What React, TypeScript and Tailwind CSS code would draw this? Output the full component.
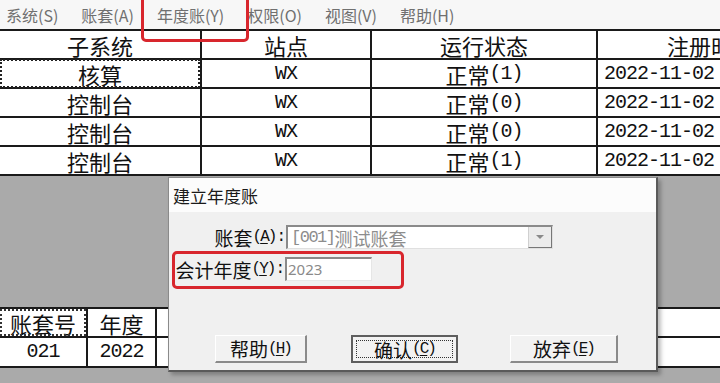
import React from 'react';

const CJK_RE = /([\u3400-\u9fff\uff00-\uffef]+)/;

function Mixed({ text }: { text: string }) {
  const parts = text.split(CJK_RE).filter(Boolean);
  return (
    <>
      {parts.map((p, i) =>
        CJK_RE.test(p) ? (
          <span key={i} className="font-['Noto_Sans_CJK_SC',sans-serif] text-[22px]">
            {p}
          </span>
        ) : (
          <span key={i} className="font-['Liberation_Mono',monospace] text-[20px] tracking-[-1px]">
            {p}
          </span>
        )
      )}
    </>
  );
}

function Mnemo({ cjk, k, colon }: { cjk: string; k: string; colon?: boolean }) {
  return (
    <span className="inline-flex items-center leading-none">
      <span className="font-['Noto_Sans_CJK_SC',sans-serif] text-[19px]">{cjk}</span>
      <span className="font-['Liberation_Mono',monospace] text-[16px] tracking-[-2px]">(</span>
      <span className="font-['Liberation_Mono',monospace] text-[16px] tracking-[-2px] underline underline-offset-2">{k}</span>
      <span className="font-['Liberation_Mono',monospace] text-[16px] tracking-[-2px]">)</span>
      {colon && <span className="font-['Liberation_Mono',monospace] text-[16px] ml-[1px] tracking-[-2px]">:</span>}
    </span>
  );
}

const rows = [
  ['核算', 'WX', '正常(1)', '2022-11-02'],
  ['控制台', 'WX', '正常(0)', '2022-11-02'],
  ['控制台', 'WX', '正常(0)', '2022-11-02'],
  ['控制台', 'WX', '正常(1)', '2022-11-02'],
];

const menus = ['系统(S)', '账套(A)', '年度账(Y)', '权限(O)', '视图(V)', '帮助(H)'];

export default function App() {
  return (
    <div className="relative w-[720px] h-[383px] overflow-hidden bg-[#aaaaaa] text-[#111] flex flex-col">
      {/* Menu bar */}
      <div className="h-[29px] shrink-0 bg-[#f7f7f7] flex items-center pl-[6px] gap-[23px] font-['Noto_Sans_CJK_SC',sans-serif] text-[16px] text-[#707070]">
        {menus.map((m) => (
          <span key={m} className="leading-none">{m}</span>
        ))}
      </div>

      {/* Top table */}
      <div className="shrink-0 bg-white border-t-2 border-[#1a1a1a] w-[720px]">
        <div className="flex h-[29px] border-b-2 border-[#1a1a1a] leading-none">
          <div className="w-[202px] border-r-2 border-[#1a1a1a] flex items-center justify-center"><Mixed text="子系统" /></div>
          <div className="w-[170px] border-r-2 border-[#1a1a1a] flex items-center justify-center"><Mixed text="站点" /></div>
          <div className="w-[226px] border-r-2 border-[#1a1a1a] flex items-center justify-center"><Mixed text="运行状态" /></div>
          <div className="flex-1 flex items-center pl-[69px] overflow-hidden whitespace-nowrap"><Mixed text="注册时" /></div>
        </div>
        {rows.map((r, i) => (
          <div key={i} className="flex h-[29px] border-b-2 border-[#1a1a1a] leading-none">
            <div className="relative w-[202px] border-r-2 border-[#1a1a1a] flex items-center justify-center">
              {i === 0 && <div className="absolute inset-x-0 top-[-1px] bottom-[-1px] border-2 border-dotted border-[#222]" />}
              <Mixed text={r[0]} />
            </div>
            <div className="w-[170px] border-r-2 border-[#1a1a1a] flex items-center justify-center"><Mixed text={r[1]} /></div>
            <div className="w-[226px] border-r-2 border-[#1a1a1a] flex items-center justify-center"><Mixed text={r[2]} /></div>
            <div className="flex-1 flex items-center pl-[6px] whitespace-nowrap"><Mixed text={r[3]} /></div>
          </div>
        ))}
      </div>

      {/* Gray area with lower table */}
      <div className="flex-1 flex flex-col">
        <div className="h-[131px] shrink-0" />
        <div className="bg-white border-t-2 border-[#1a1a1a] border-b-2 leading-none">
          <div className="flex h-[29px] border-b-2 border-[#1a1a1a]">
            <div className="relative w-[88px] border-r-2 border-[#1a1a1a] flex items-center justify-center">
              <div className="absolute inset-0 border-2 border-dotted border-[#333]" />
              <Mixed text="账套号" />
            </div>
            <div className="w-[69px] border-r-2 border-[#1a1a1a] flex items-center justify-center"><Mixed text="年度" /></div>
            <div className="flex-1" />
          </div>
          <div className="flex h-[28px]">
            <div className="w-[88px] border-r-2 border-[#1a1a1a] flex items-center justify-center"><Mixed text="021" /></div>
            <div className="w-[69px] border-r-2 border-[#1a1a1a] flex items-center justify-center"><Mixed text="2022" /></div>
            <div className="flex-1" />
          </div>
        </div>
      </div>

      {/* Red highlight on menu */}
      <div className="absolute left-[141px] top-[-8px] w-[108px] h-[50px] rounded-[5px] border-[3px] border-[#d8262d]" />

      {/* Dialog */}
      <div className="absolute left-[168px] top-[177px] w-[490px] h-[195px] flex flex-col border border-[#8a8a8a] border-r-2 border-b-2 border-r-[#5a5a5a] border-b-[#5a5a5a] shadow-[3px_3px_4px_rgba(0,0,0,0.25)]">
        <div className="h-[34px] shrink-0 bg-[#fcfcfc] flex items-center pl-[4px] font-['Noto_Sans_CJK_SC',sans-serif] text-[17px] leading-none text-[#1a1a1a]">
          建立年度账
        </div>
        <div className="relative flex-1 bg-[#f0f0f0]">
          <div className="pt-[13px] flex flex-col gap-[8px]">
            <div className="flex items-center h-[24px]">
              <div className="w-[117px] flex justify-end pr-[2px]">
                <Mnemo cjk="账套" k="A" colon />
              </div>
              <div className="w-[267px] h-[24px] flex bg-white border-t-2 border-l-2 border-t-[#8a8a8a] border-l-[#8a8a8a] border-b border-r border-b-[#e0e0e0] border-r-[#e0e0e0]">
                <div className="flex-1 flex items-center pl-[3px] leading-none text-[#8d8d8d]">
                  <span className="font-['Liberation_Mono',monospace] text-[17px] tracking-[-1.5px]">[001]</span>
                  <span className="font-['Noto_Sans_CJK_SC',sans-serif] text-[18px]">测试账套</span>
                </div>
                <div className="w-[24px] bg-[#ececec] border-l border-[#d0d0d0] border-r border-r-[#777] border-b border-b-[#777] flex items-center justify-center">
                  <svg width="10" height="6" viewBox="0 0 10 6"><path d="M1 1h8L5 5z" fill="#8a8a8a" /></svg>
                </div>
              </div>
            </div>
            <div className="flex items-center h-[24px]">
              <div className="w-[116px] flex justify-end pr-[2px]">
                <Mnemo cjk="会计年度" k="Y" colon />
              </div>
              <div className="w-[87px] h-[24px] flex items-center pl-[1px] bg-white border-t-2 border-l-2 border-t-[#8a8a8a] border-l-[#8a8a8a] border-b border-r border-b-[#e6e6e6] border-r-[#e6e6e6] font-['Noto_Sans','Liberation_Sans',sans-serif] text-[15px] leading-none text-[#8a8a8a]">
                2023
              </div>
            </div>
          </div>

          <div className="mt-[54px] flex items-center">
            <div className="ml-[46px] w-[92px] h-[28px] flex items-center justify-center bg-[#f2f2f2] border border-t-white border-l-white border-r-2 border-b-2 border-r-[#8a8a8a] border-b-[#8a8a8a]">
              <Mnemo cjk="帮助" k="H" />
            </div>
            <div className="ml-[44px] w-[107px] h-[28px] p-[3px] bg-[#f2f2f2] border-2 border-[#5e5e5e]">
              <div className="w-full h-full flex items-center justify-center border border-dotted border-[#333]">
                <Mnemo cjk="确认" k="C" />
              </div>
            </div>
            <div className="ml-[52px] w-[108px] h-[28px] flex items-center justify-center bg-[#f2f2f2] border border-t-white border-l-white border-r-2 border-b-2 border-r-[#8a8a8a] border-b-[#8a8a8a]">
              <Mnemo cjk="放弃" k="E" />
            </div>
          </div>

          {/* Red highlight around year field */}
          <div className="absolute left-[3px] top-[39px] w-[232px] h-[38px] rounded-[5px] border-[3px] border-[#d8262d]" />
        </div>
      </div>
    </div>
  );
}
